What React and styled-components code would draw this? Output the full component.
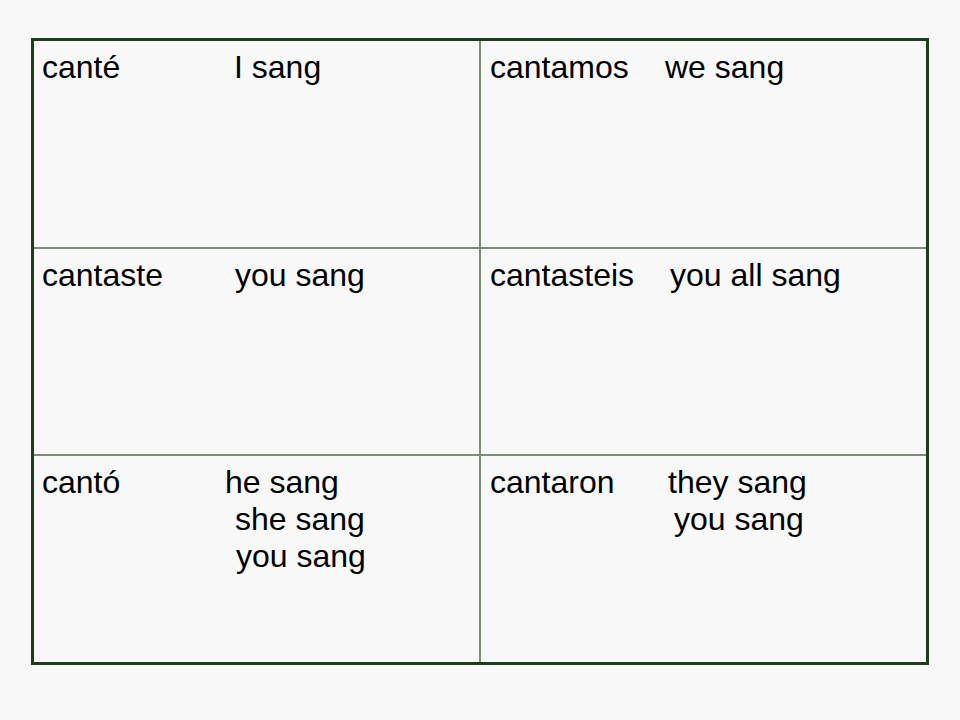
import React from "react";
import styled, { createGlobalStyle } from "styled-components";

const GlobalStyle = createGlobalStyle`
  html, body {
    margin: 0;
    padding: 0;
    background: #f8f8f8;
  }
  body {
    width: 960px;
    height: 720px;
    overflow: hidden;
  }
`;

const Page = styled.div`
  padding: 38px 0 0 31px;
`;

const Table = styled.div`
  display: grid;
  grid-template-columns: 447px 445px;
  grid-template-rows: 208px 207px 206px;
  width: 892px;
  border: 3px solid #1d3d1b;
  font-family: "Liberation Sans", Arial, sans-serif;
  font-size: 32px;
  line-height: 37px;
  color: #000;
`;

const Cell = styled.div`
  padding: 8px 0 0 ${(p) => (p.$right ? 9 : 8)}px;
  border-right: ${(p) => (p.$right ? "none" : "2px solid #7d8e75")};
  border-bottom: ${(p) => (p.$last ? "none" : "2px solid #7d8e75")};
  box-sizing: border-box;
`;

const Line = styled.div`
  display: flex;
  white-space: nowrap;
`;

const Verb = styled.span`
  flex: 0 0 ${(p) => p.$w}px;
`;

const rows = [
  [
    { verb: "canté", lines: [[192, "I sang"]] },
    { verb: "cantamos", lines: [[175, "we sang"]] },
  ],
  [
    { verb: "cantaste", lines: [[193, "you sang"]] },
    { verb: "cantasteis", lines: [[180, "you all sang"]] },
  ],
  [
    {
      verb: "cantó",
      lines: [
        [183, "he sang"],
        [193, "she sang"],
        [194, "you sang"],
      ],
    },
    {
      verb: "cantaron",
      lines: [
        [178, "they sang"],
        [184, "you sang"],
      ],
    },
  ],
];

const App = () => {
  return (
    <Page>
      <GlobalStyle />
      <Table>
        {rows.map((row, r) =>
          row.map((cell, c) => (
            <Cell key={`${r}-${c}`} $right={c === 1} $last={r === rows.length - 1}>
              {cell.lines.map(([at, text], i) => (
                <Line key={i}>
                  <Verb $w={at}>{i === 0 ? cell.verb : ""}</Verb>
                  <span>{text}</span>
                </Line>
              ))}
            </Cell>
          ))
        )}
      </Table>
    </Page>
  );
};

export default App;
